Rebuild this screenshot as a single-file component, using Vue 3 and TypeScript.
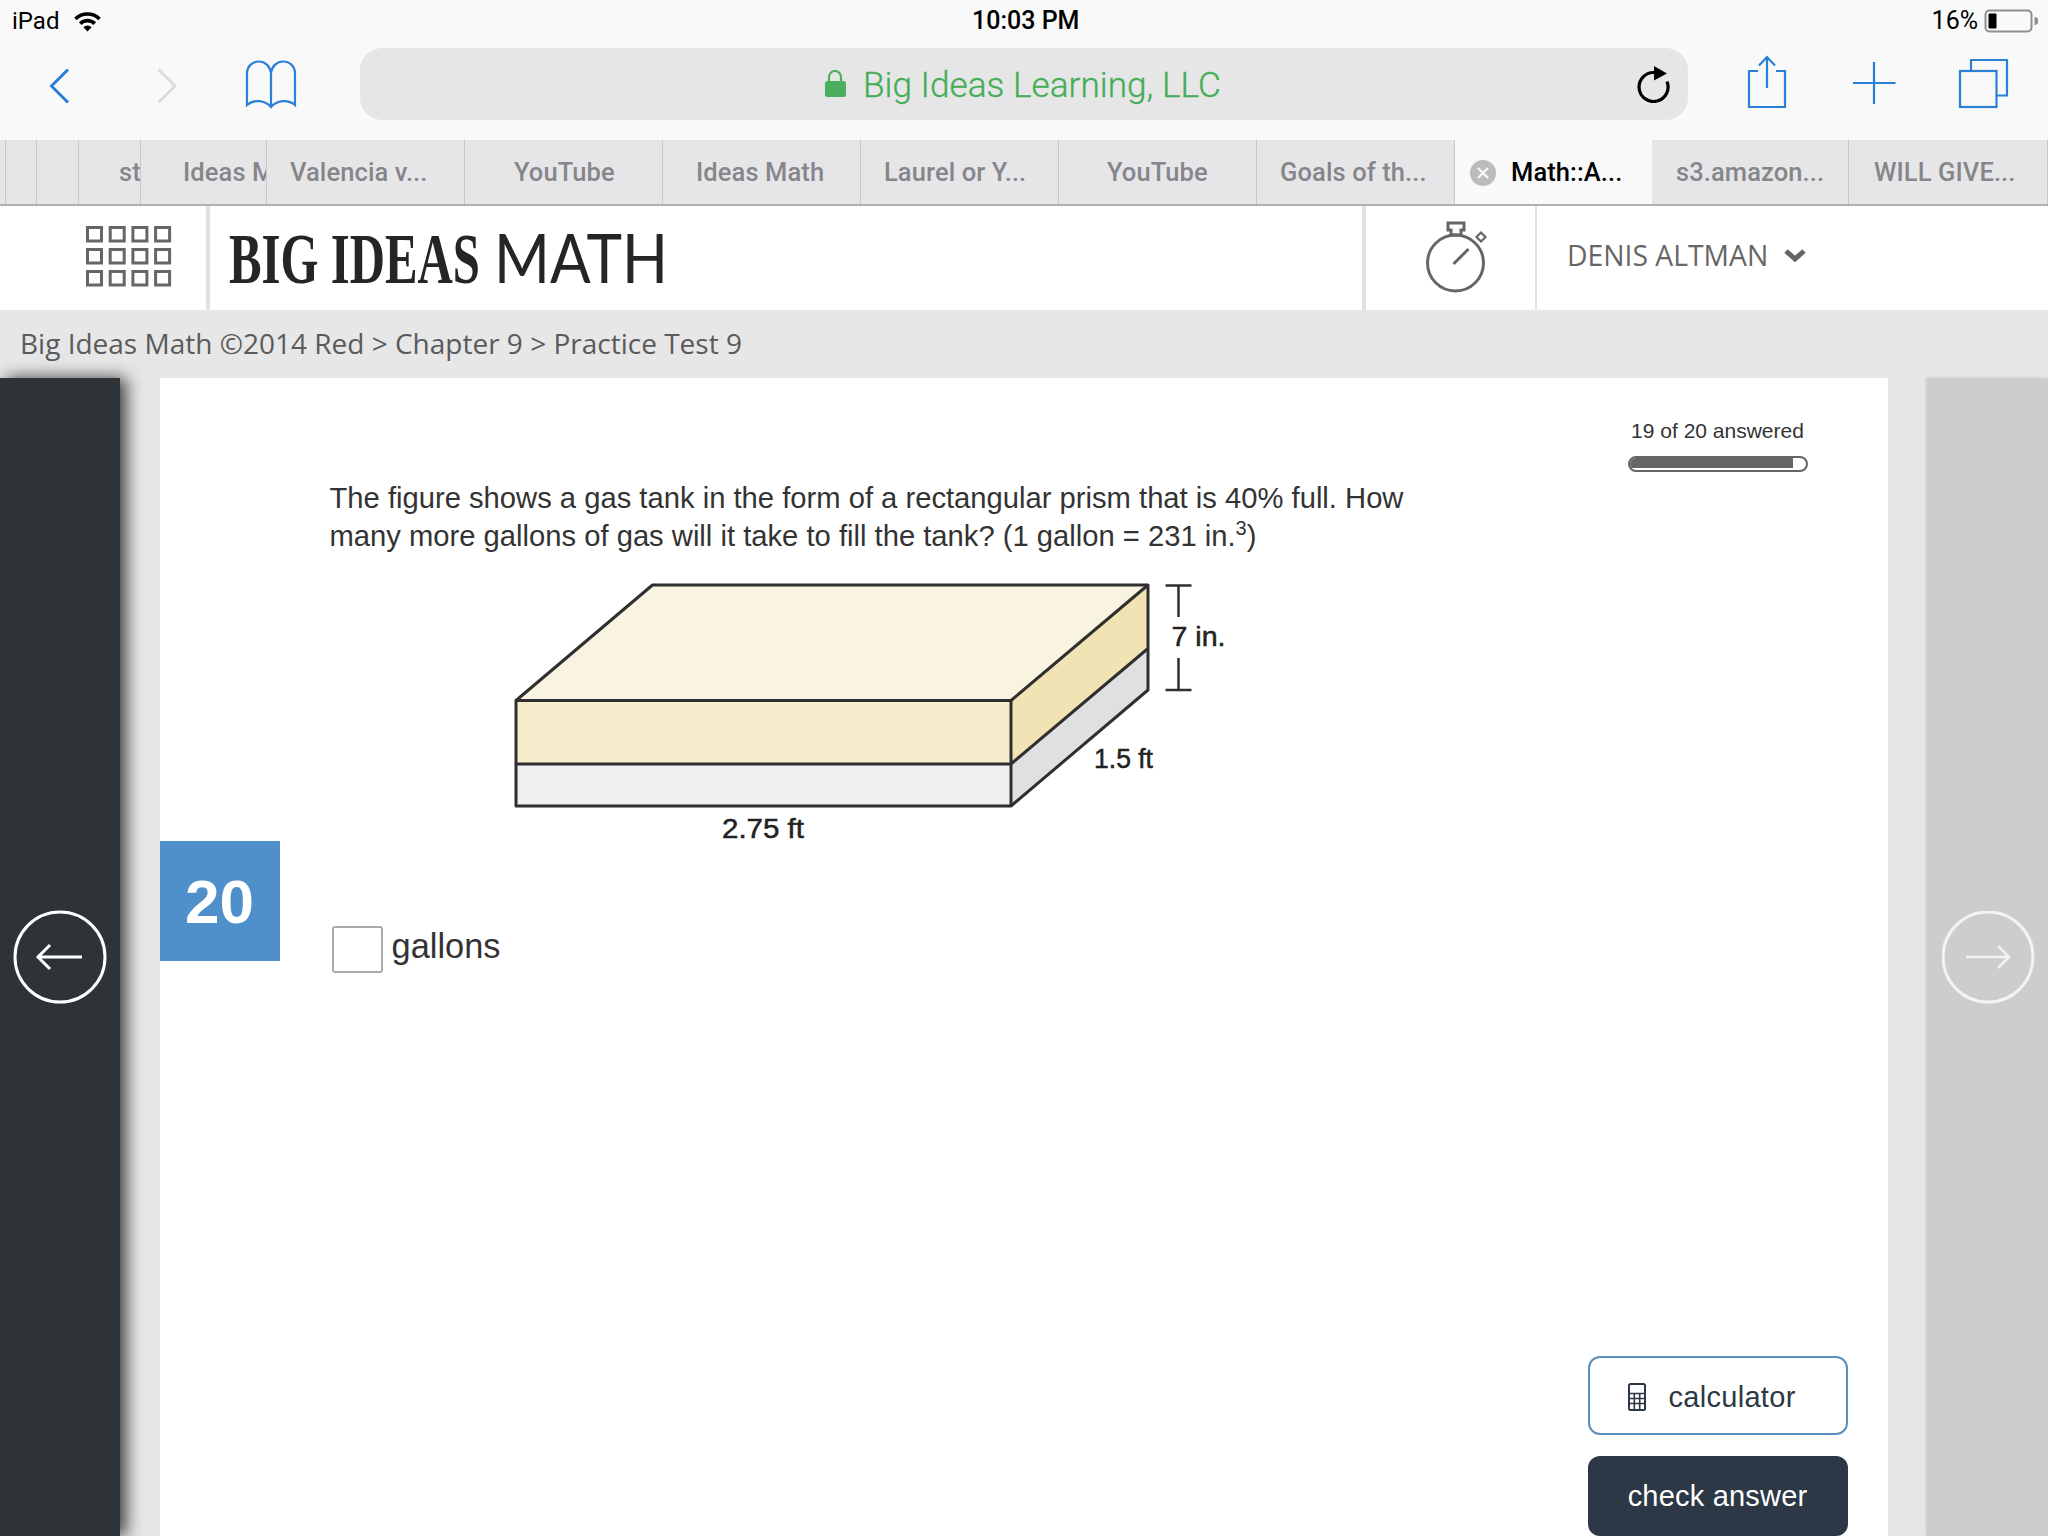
<script setup lang="ts">
interface Tab { label: string; width: number; pad: number; active?: boolean }
const tabs: Tab[] = [
  { label: '', width: 6, pad: 0 },
  { label: '', width: 31, pad: 0 },
  { label: '', width: 42, pad: 0 },
  { label: 'st', width: 62, pad: 40 },
  { label: 'Ideas Math', width: 126, pad: 42 },
  { label: 'Valencia v...', width: 198, pad: 23 },
  { label: 'YouTube', width: 198, pad: 49 },
  { label: 'Ideas Math', width: 198, pad: 33 },
  { label: 'Laurel or Y...', width: 198, pad: 23 },
  { label: 'YouTube', width: 198, pad: 48 },
  { label: 'Goals of th...', width: 198, pad: 23 },
  { label: 'Math::A...', width: 197, pad: 56, active: true },
  { label: 's3.amazon...', width: 197, pad: 24 },
  { label: 'WILL GIVE...', width: 199, pad: 25 },
]
const gridCells = Array.from({ length: 12 }, (_, i) => ({ x: 87.5 + (i % 4) * 22.7, y: 227.5 + Math.floor(i / 4) * 22 }))
</script>

<template>
  <div class="page">
    <header class="chrome">
      <div class="status">
        <div class="status-left">
          <span>iPad</span>
          <svg class="wifi" width="30" height="22" viewBox="72 9 30 22">
            <path d="M75.500 18a17 17 0 0 1 24 0" fill="none" stroke="#000" stroke-width="3.600" />
            <path d="M80.200 22.600a10.400 10.400 0 0 1 14.600 0" fill="none" stroke="#000" stroke-width="3.600" />
            <path d="M83.400 26.200a6 6 0 0 1 8.200 0L87.500 30.500z" fill="#000" />
          </svg>
        </div>
        <div class="status-time">10:03 PM</div>
        <div class="status-right">
          <span>16%</span>
          <svg width="54" height="24" viewBox="1984 8 54 24">
            <rect x="1985.500" y="9.500" width="46" height="21" rx="4" fill="none" stroke="#8e8e8e" stroke-width="2" />
            <rect x="1988.500" y="12.500" width="8" height="15" rx="1" fill="#000" />
            <path d="M2034.500 16v8a4 4 0 0 0 0-8z" fill="#8e8e8e" />
          </svg>
        </div>
      </div>
      <div class="toolbar">
        <svg class="tool" width="120" height="72" viewBox="0 48 120 72">
          <path d="M68 69.500 51.500 86 68 102.500" fill="none" stroke="#2a7fd6" stroke-width="3" />
        </svg>
        <svg class="tool" width="86" height="72" viewBox="120 48 86 72">
          <path d="M158.500 69.500 175 86 158.500 102.500" fill="none" stroke="#dcdcdc" stroke-width="3" />
        </svg>
        <svg class="tool" width="154" height="72" viewBox="206 48 154 72">
          <path d="M271 107V73c-1-7-6-11.500-12-11.500-7 0-12 5-12 12V105c7-6 18-5 24 2 6-7 17-8 24-2V73.500c0-7-5-12-12-12-6 0-11 4.500-12 11.500" fill="none" stroke="#2a7fd6" stroke-width="2.200" />
        </svg>
        <div class="urlbar">
          <div class="url-center">
            <svg width="22" height="28" viewBox="824 70 22 28">
              <path d="M829 82v-5a6 6 0 0 1 12 0v5" fill="none" stroke="#4caf5e" stroke-width="2.200" />
              <rect x="825" y="81" width="21" height="16" rx="2.500" fill="#4caf5e" />
            </svg>
            <span class="url-text">Big Ideas Learning, LLC</span>
          </div>
          <svg class="reload" width="36" height="38" viewBox="1636 65 36 38">
            <path d="M1656 72.500a14.500 14.500 0 1 0 13 9" fill="none" stroke="#000" stroke-width="3.200" />
            <path d="M1656 66l13 7.500-13 7z" fill="#000" />
          </svg>
        </div>
        <svg class="tool" width="360" height="72" viewBox="1688 48 360 72">
          <path d="M1758 71h-9v36h36V71h-9" fill="none" stroke="#2a7fd6" stroke-width="2.200" />
          <path d="M1767 88V57M1759 65.500l8-8.500 8 8.500" fill="none" stroke="#2a7fd6" stroke-width="2.200" />
          <path d="M1853 83h42.500M1874 62v42" fill="none" stroke="#2a7fd6" stroke-width="2.200" />
          <rect x="1960" y="71" width="36.500" height="36" fill="none" stroke="#2a7fd6" stroke-width="2.200" />
          <path d="M1971 71V60h36v35.500h-10" fill="none" stroke="#2a7fd6" stroke-width="2.200" />
        </svg>
      </div>
    </header>

    <nav class="tabs">
      <div
        v-for="(tab, i) in tabs"
        :key="i"
        class="tab"
        :class="{ active: tab.active }"
        :style="{ width: tab.width + 'px', paddingLeft: tab.pad + 'px' }"
      >
        <svg v-if="tab.active" class="tab-close" width="26" height="26" viewBox="0 0 26 26">
          <circle cx="13" cy="13" r="13" fill="#bcbcbc" />
          <path d="M8 8l10 10M18 8 8 18" stroke="#f9f9f9" stroke-width="2.200" />
        </svg>
        <span>{{ tab.label }}</span>
      </div>
    </nav>

    <section class="apphead">
      <div class="apps">
        <svg width="86" height="62" viewBox="86 226 86 62">
          <rect v-for="(c, i) in gridCells" :key="i" :x="c.x" :y="c.y" width="14" height="13.500" fill="none" stroke="#666" stroke-width="3" />
        </svg>
      </div>
      <div class="logo">
        <svg width="460" height="70" viewBox="224 222 460 70">
          <text x="229" y="283" class="logo-big" textLength="251" lengthAdjust="spacingAndGlyphs">BIG IDEAS</text>
          <text x="494" y="283" class="logo-math" textLength="174" lengthAdjust="spacingAndGlyphs">MATH</text>
        </svg>
      </div>
      <div class="timer">
        <svg width="80" height="80" viewBox="1415 218 80 80">
          <circle cx="1454.500" cy="263" r="28" fill="none" stroke="#666" stroke-width="3" />
          <path d="M1447 223h16v7h-3v5h-10v-5h-3z" fill="none" stroke="#666" stroke-width="3" />
          <path d="M1475.500 237l4.500-4.500 4.500 4.500-4.500 4.500z" fill="none" stroke="#666" stroke-width="2.200" />
          <path d="M1452.500 264 1467.500 249" stroke="#666" stroke-width="3" />
        </svg>
      </div>
      <div class="user">
        <span>DENIS ALTMAN</span>
        <svg width="24" height="16" viewBox="0 0 24 16">
          <path d="M3 4l9 8 9-8" fill="none" stroke="#666" stroke-width="5" />
        </svg>
      </div>
    </section>

    <div class="crumbs">Big Ideas Math ©2014 Red &gt; Chapter 9 &gt; Practice Test 9</div>

    <main class="main">
      <aside class="side side-left">
        <svg width="96" height="96" viewBox="0 0 96 96">
          <circle cx="48" cy="48" r="45" fill="none" stroke="#fff" stroke-width="3" />
          <path d="M70 48H27M38 36 26 48l12 12" fill="none" stroke="#fff" stroke-width="3" />
        </svg>
      </aside>

      <article class="card">
        <div class="badge">20</div>
        <div class="progress">
          <div class="progress-label">19 of 20 answered</div>
          <div class="progress-track"><div class="progress-fill"></div></div>
        </div>
        <p class="question">
          The figure shows a gas tank in the form of a rectangular prism that is 40% full. How<br />
          many more gallons of gas will it take to fill the tank? (1 gallon = 231 in.<sup>3</sup>)
        </p>
        <svg class="figure" width="760" height="284" viewBox="500 566 760 284">
          <polygon points="652.500,585 1148,585 1011,700.500 516,700.500" fill="#f9f3e1" />
          <rect x="516" y="700.500" width="495" height="63.500" fill="#f6ebcb" />
          <rect x="516" y="764" width="495" height="42" fill="#eeefee" />
          <polygon points="1011,700.500 1148,585 1148,648.500 1011,764" fill="#f2e3b4" />
          <polygon points="1011,764 1148,648.500 1148,690 1011,806" fill="#dfe0e1" />
          <g fill="none" stroke="#2f2f2f" stroke-width="3" stroke-linejoin="round">
            <path d="M516 700.500 652.500 585H1148V690L1011 806H516z" />
            <path d="M516 700.500H1011L1148 585" />
            <path d="M1011 700.500V806M516 764H1011L1148 648.500" />
          </g>
          <g stroke="#2f2f2f" stroke-width="2.500">
            <path d="M1165.500 585.500H1191.500M1178.500 585.500V617M1178.500 658V690M1165.500 690H1191.500" fill="none" />
          </g>
          <text x="1171.500" y="646" class="fig-label" textLength="54" lengthAdjust="spacingAndGlyphs">7 in.</text>
          <text x="1094" y="768" class="fig-label" textLength="59" lengthAdjust="spacingAndGlyphs">1.5 ft</text>
          <text x="722" y="838" class="fig-label" textLength="82" lengthAdjust="spacingAndGlyphs">2.75 ft</text>
        </svg>
        <div class="answer">
          <div class="answer-box"></div>
          <span class="answer-unit">gallons</span>
        </div>
        <div class="actions">
          <button class="btn btn-outline">
            <svg width="18" height="28" viewBox="0 0 18 28">
              <rect x="1" y="1" width="16" height="26" rx="1.500" fill="none" stroke="#2c3845" stroke-width="2" />
              <path d="M1 10.500h16M1 15.500h16M1 20.500h16M6.300 10.500V27M11.700 10.500V27" stroke="#2c3845" stroke-width="1.600" fill="none" />
            </svg>
            <span>calculator</span>
          </button>
          <button class="btn btn-solid">check answer</button>
        </div>
      </article>

      <aside class="side side-right">
        <svg width="96" height="96" viewBox="0 0 96 96">
          <circle cx="46" cy="46" r="45" fill="none" stroke="#f3f3f3" stroke-width="3" />
          <path d="M24 46H67M56 35l11 11-11 11" fill="none" stroke="#f3f3f3" stroke-width="2.500" />
        </svg>
      </aside>
    </main>
  </div>
</template>

<style>
html, body { margin: 0; background: #fff; }
</style>

<style scoped>
.page { width: 2048px; height: 1536px; overflow: hidden; display: flex; flex-direction: column; background: #e7e7e7; font-family: "Liberation Sans", Arial, sans-serif; }
.chrome { height: 140px; background: #f9f9f9; flex: none; }
.status { height: 48px; position: relative; display: flex; justify-content: space-between; align-items: flex-start; font-family: Roboto, sans-serif; font-size: 24px; color: #000; }
.status-left { display: flex; align-items: center; gap: 13px; padding: 7px 0 0 12px; line-height: 28px; }
.status-time { position: absolute; left: 972px; top: 7px; line-height: 28px; font-weight: 500; font-size: 25px; }
.status-right { display: flex; align-items: center; gap: 6px; padding: 7px 10px 0 0; line-height: 28px; font-size: 25px; }
.toolbar { height: 72px; display: flex; }
.tool { flex: none; display: block; }
.urlbar { flex: none; width: 1328px; height: 72px; background: #e6e6e6; border-radius: 22px; display: flex; align-items: center; justify-content: space-between; }
.url-center { display: flex; align-items: center; gap: 17px; margin-left: 464px; }
.url-text { font-family: Roboto, sans-serif; font-weight: 300; font-size: 35.200px; color: #45ac58; line-height: 44px; position: relative; top: 1px; -webkit-text-stroke: 0.300px #45ac58; }
.reload { margin-right: 18px; }
.tabs { height: 66px; flex: none; display: flex; background: #e6e6e8; border-bottom: 2px solid #b0b0b2; box-sizing: border-box; }
.tab { height: 64px; box-sizing: border-box; border-right: 1px solid #c8c8ca; overflow: hidden; white-space: nowrap; display: flex; align-items: center; font-family: Roboto, sans-serif; font-weight: 500; font-size: 25.500px; letter-spacing: 0.100px; color: #86868a; position: relative; flex: none; }
.tab.active { background: #f9f9f9; color: #000; border-right: none; }
.tab-close { position: absolute; left: 15px; top: 20px; }
.apphead { height: 104px; flex: none; background: #fff; display: flex; }
.apps { flex: none; border-right: 4px solid #e1e1e1; display: flex; align-items: flex-start; padding-top: 20px; box-sizing: border-box; width: 210px; padding-left: 86px; }
.logo { width: 1156px; flex: none; border-right: 4px solid #e1e1e1; box-sizing: border-box; padding: 16px 0 0 14px; }
.logo-big { font-family: "Liberation Serif", serif; font-weight: 700; font-size: 72px; fill: #252525; }
.logo-math { font-family: Lato, "Liberation Sans", sans-serif; font-weight: 400; font-size: 68px; fill: #252525; }
.timer { width: 171px; flex: none; border-right: 2px solid #e1e1e1; box-sizing: border-box; padding: 12px 0 0 50px; }
.user { display: flex; align-items: center; gap: 15px; padding: 0 0 6px 30px; font-family: "Open Sans", sans-serif; font-size: 28.300px; color: #666; }
.crumbs { height: 68px; flex: none; box-sizing: border-box; padding: 13px 0 0 20px; font-family: "Open Sans", sans-serif; font-size: 28px; line-height: 40px; color: #5a5a5a; }
.main { flex: 1; display: flex; justify-content: space-between; min-height: 0; }
.side { width: 120px; flex: none; box-sizing: border-box; padding-top: 533px; }
.side-left { background: #2e3338; box-shadow: 6px 0 16px rgba(0, 0, 0, 0.75); padding: 531px 0 0 12px; position: relative; }
.side-right { width: 121px; background: #cdcdcd; box-shadow: -1px 0 3px rgba(0, 0, 0, 0.12); padding-left: 15px; }
.card { width: 1728px; flex: none; background: #fff; position: relative; display: flex; flex-direction: column; box-sizing: border-box; padding-top: 41px; }
.badge { position: absolute; left: 0; top: 463px; width: 120px; height: 120px; background: #4f90cb; color: #fff; font-weight: 700; font-size: 62px; display: flex; align-items: center; justify-content: center; }
.progress { align-self: flex-end; margin-right: 80px; width: 180px; }
.progress-label { font-size: 21px; line-height: 24px; text-align: center; color: #333; white-space: nowrap; }
.progress-track { margin-top: 13px; height: 16px; box-sizing: border-box; border: 2px solid #666; border-radius: 8px; overflow: hidden; }
.progress-fill { width: 93%; height: 10px; background: #666; }
.question { margin: 7px 0 11px 170px; font-size: 29.200px; line-height: 38px; color: #333; white-space: nowrap; }
.question sup { font-size: 20px; line-height: 0; }
.figure { display: block; margin-left: 340px; flex: none; }
.fig-label { font-family: "Liberation Sans", sans-serif; font-size: 27px; fill: #222; stroke: #222; stroke-width: 0.500; }
.answer { display: flex; align-items: center; gap: 9px; margin: 76px 0 0 172px; font-size: 34.400px; color: #333; }
.answer-box { width: 51px; height: 47px; box-sizing: border-box; border: 2px solid #aaa; border-radius: 3px; }
.answer-unit { position: relative; top: -3px; }
.actions { margin-top: auto; align-self: flex-end; margin-right: 40px; display: flex; flex-direction: column; gap: 21px; }
.btn { width: 260px; height: 79px; box-sizing: border-box; border-radius: 12px; font-family: "Liberation Sans", sans-serif; display: flex; align-items: center; justify-content: center; }
.btn-outline { background: #fff; border: 2px solid #5b8fbb; color: #2c3845; font-size: 29px; letter-spacing: 0.300px; gap: 23px; padding: 3px 0 0 38px; justify-content: flex-start; }
.btn-solid { height: 80px; background: #2c3845; border: none; color: #fff; font-size: 29px; letter-spacing: 0.200px; padding-top: 2px; }
</style>
